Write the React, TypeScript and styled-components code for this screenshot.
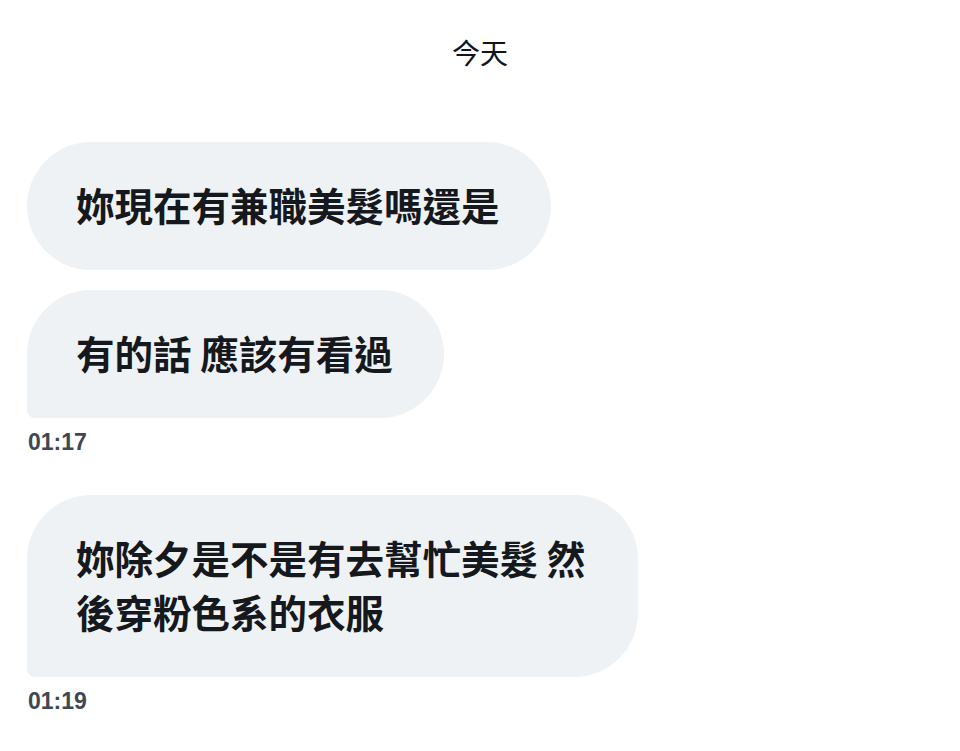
import React from "react";
import styled, { createGlobalStyle } from "styled-components";

const Global = createGlobalStyle`
  html, body { margin: 0; padding: 0; background: #ffffff; }
  body { font-family: "Noto Sans CJK TC", "Noto Sans", sans-serif; }
`;

const Page = styled.div`
  width: 960px;
  min-height: 751px;
  box-sizing: border-box;
  padding: 32px 0 0 27px;
  display: flex;
  flex-direction: column;
`;

const DayLabel = styled.div`
  align-self: center;
  margin-left: -27px;
  font-size: 28px;
  line-height: 40px;
  font-weight: 400;
  color: #111418;
  margin-bottom: 70px;
`;

const Group = styled.div`
  display: flex;
  flex-direction: column;
  align-items: flex-start;
  gap: 20px;
  margin-bottom: 40px;
`;

const Bubble = styled.div<{ $last?: boolean }>`
  box-sizing: border-box;
  max-width: 611px;
  padding: 35px 51px 39px 49px;
  background: #eff2f4;
  border-radius: 64px;
  border-bottom-left-radius: ${(p) => (p.$last ? "8px" : "64px")};
  font-size: 38.5px;
  line-height: 54px;
  font-weight: 700;
  color: #15181c;
`;

const Time = styled.div`
  margin-top: -9px;
  padding-left: 1px;
  font-family: "Liberation Sans", Arial, sans-serif;
  font-size: 23px;
  line-height: 26px;
  font-weight: 700;
  color: #3e4855;
`;

type Msg = { text: string };
const groups: { msgs: Msg[]; time: string }[] = [
  {
    msgs: [{ text: "妳現在有兼職美髮嗎還是" }, { text: "有的話 應該有看過" }],
    time: "01:17",
  },
  {
    msgs: [{ text: "妳除夕是不是有去幫忙美髮 然後穿粉色系的衣服" }],
    time: "01:19",
  },
];

export default function App() {
  return (
    <>
      <Global />
      <Page>
        <DayLabel>今天</DayLabel>
        {groups.map((g, gi) => (
          <Group key={gi}>
            {g.msgs.map((m, i) => (
              <Bubble key={i} $last={i === g.msgs.length - 1}>
                {m.text}
              </Bubble>
            ))}
            <Time>{g.time}</Time>
          </Group>
        ))}
      </Page>
    </>
  );
}
